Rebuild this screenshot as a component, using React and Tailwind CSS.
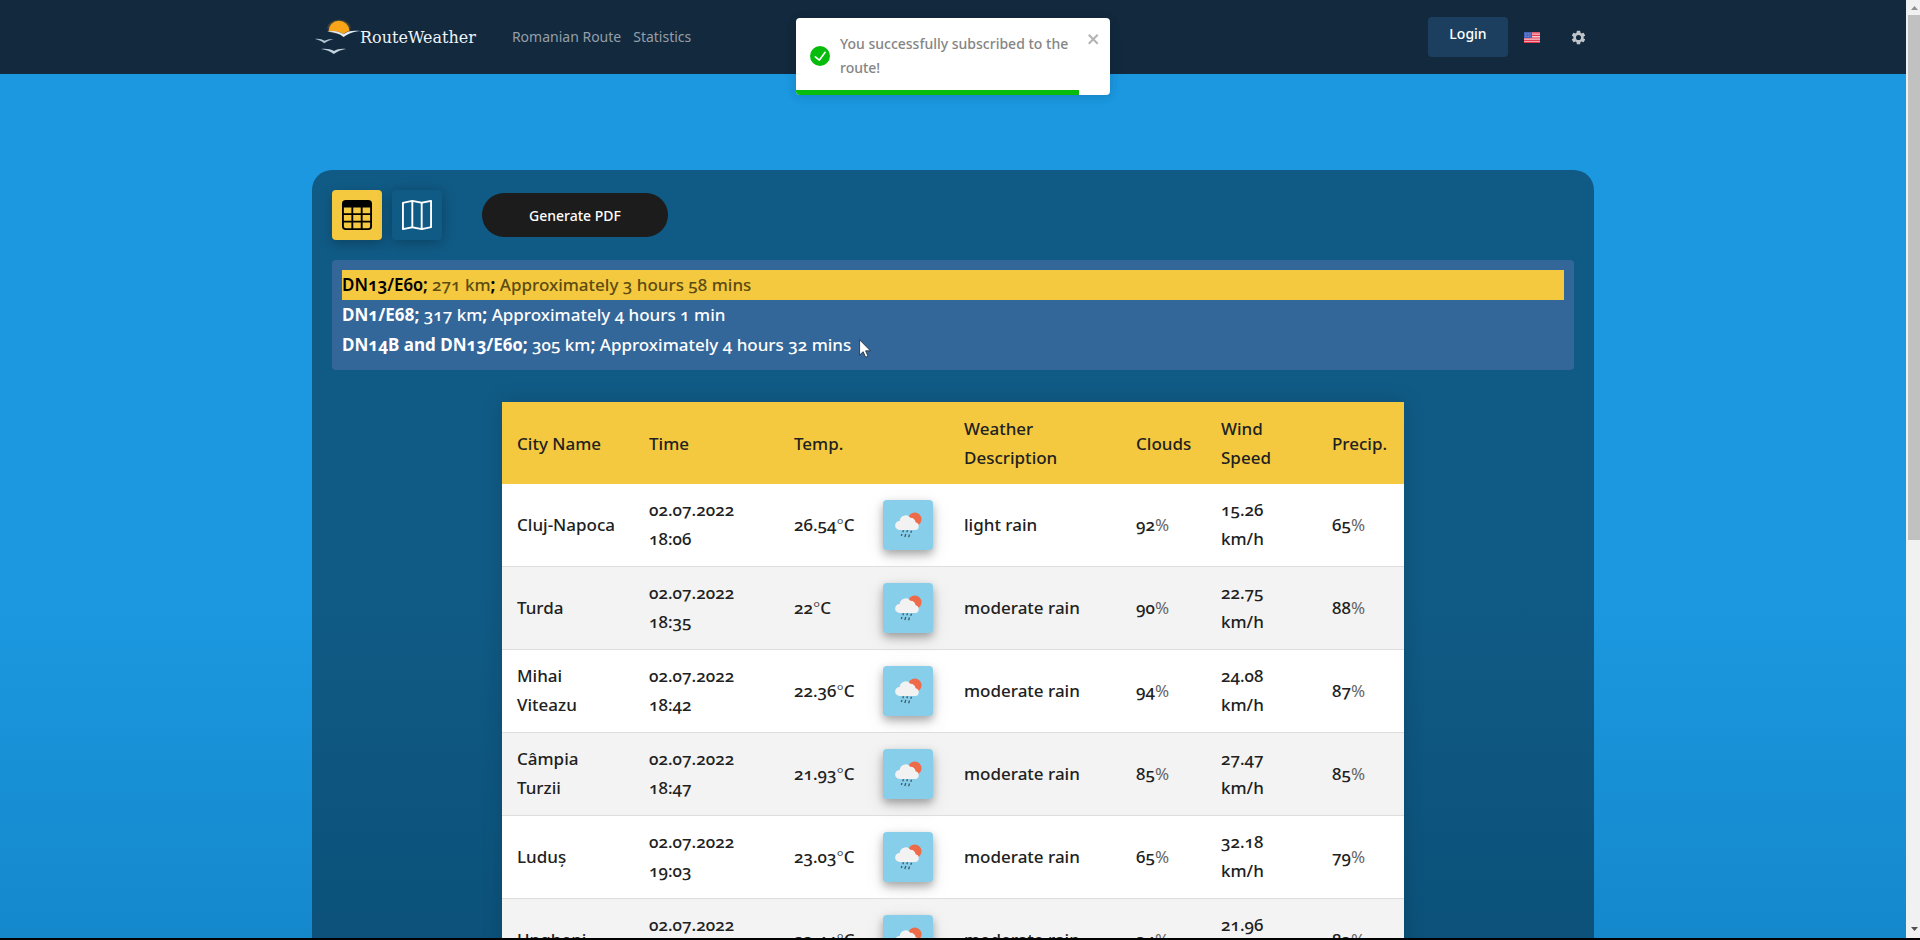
import React from "react";

const routes = [
  { name: "DN13/E60", distance: "271 km", time: "Approximately 3 hours 58 mins", active: true },
  { name: "DN1/E68", distance: "317 km", time: "Approximately 4 hours 1 min", active: false },
  { name: "DN14B and DN13/E60", distance: "305 km", time: "Approximately 4 hours 32 mins", active: false },
];

const rows = [
  { city: "Cluj-Napoca", time: "18:06", temp: "26.54", desc: "light rain", clouds: "92", wind: "15.26", precip: "65" },
  { city: "Turda", time: "18:35", temp: "22", desc: "moderate rain", clouds: "90", wind: "22.75", precip: "88" },
  { city: "Mihai Viteazu", time: "18:42", temp: "22.36", desc: "moderate rain", clouds: "94", wind: "24.08", precip: "87" },
  { city: "Câmpia Turzii", time: "18:47", temp: "21.93", desc: "moderate rain", clouds: "85", wind: "27.47", precip: "85" },
  { city: "Luduș", time: "19:03", temp: "23.03", desc: "moderate rain", clouds: "65", wind: "32.18", precip: "79" },
  { city: "Ungheni", time: "19:34", temp: "23.44", desc: "moderate rain", clouds: "34", wind: "21.96", precip: "83" },
];

function Logo() {
  return (
    <svg viewBox="0 0 46 36" className="h-9 w-[46px]" aria-hidden="true">
      <defs>
        <radialGradient id="glow">
          <stop offset="0.7" stopColor="#f9a51a" stopOpacity="0.3" />
          <stop offset="1" stopColor="#f9a51a" stopOpacity="0" />
        </radialGradient>
      </defs>
      <path d="M11 13a13 13 0 0 1 26 0l-8 3-12-1z" fill="url(#glow)" />
      <path d="M13.500 12.500a10.500 10.500 0 0 1 21-.5c-3 .4-4.500 1.800-6 3.200-3.500-2.800-8-3.600-15-2.700z" fill="#f9a51a" />
      <path d="M12 12.700c7-1.700 12.500-.3 16.500 2.600 4-3.200 8.500-4.100 17-3.300-7.500.7-12 2.600-16.800 6-4.200-3.300-9-5-16.700-5.300z" fill="#e4edf5" />
      <path d="M0 20c4-.5 7 .3 9.500 1.800 2.500-1.500 5-1.900 9-1.500-3.800.7-6.500 2-9.300 4-2.600-2.100-5-3.500-9.200-4.300z" fill="#b6c8d6" />
      <path d="M6 30c5-.7 9.500.1 13 2 3.200-1.900 7-2.500 12-2-5 .8-8.500 2.300-12.200 4.900-3.600-2.600-7.300-4.200-12.800-4.900z" fill="#c3d3df" />
    </svg>
  );
}

function Flag() {
  return (
    <svg viewBox="0 0 16 11" className="h-[11px] w-4" aria-hidden="true">
      <rect width="16" height="11" fill="#f3c9cf" />
      <path d="M0 .8h16M0 3.400h16M0 6h16M0 8.300h16M0 10.400h16" stroke="#e2384f" strokeWidth="1.200" />
      <rect width="8" height="6" fill="#4560b8" />
      <path d="M1 1.500h6M1 3h6M1 4.500h6" stroke="#a9b6e4" strokeWidth=".6" strokeDasharray=".7 .9" />
    </svg>
  );
}

function Gear() {
  return (
    <svg viewBox="0 0 24 24" className="size-[17px]" fill="#bfc4c9" aria-hidden="true">
      <path d="M19.140 12.940c.04-.3.060-.61.060-.94s-.02-.64-.07-.94l2.030-1.580a.49.490 0 0 0 .12-.61l-1.920-3.320a.49.490 0 0 0-.59-.22l-2.390.96a7 7 0 0 0-1.620-.94l-.36-2.540a.48.480 0 0 0-.48-.41h-3.840a.47.470 0 0 0-.47.41l-.36 2.540a7.200 7.200 0 0 0-1.620.94l-2.390-.96a.48.480 0 0 0-.59.220L2.740 8.870a.47.470 0 0 0 .12.610l2.030 1.580c-.05.3-.09.630-.09.940s.02.640.07.940l-2.030 1.580a.49.490 0 0 0-.12.610l1.920 3.320c.12.220.37.290.59.220l2.390-.96c.5.380 1.030.7 1.620.94l.36 2.540c.05.240.24.410.48.410h3.840c.24 0 .44-.17.470-.41l.36-2.540a7 7 0 0 0 1.620-.94l2.390.96c.22.080.47 0 .59-.22l1.920-3.320a.47.470 0 0 0-.12-.61zM12 15.600a3.600 3.600 0 1 1 0-7.200 3.600 3.600 0 0 1 0 7.200z" />
    </svg>
  );
}

function TableIcon() {
  return (
    <svg viewBox="0 0 16 16" className="size-[30px]" fill="black" aria-hidden="true">
      <path d="M0 2a2 2 0 0 1 2-2h12a2 2 0 0 1 2 2v12a2 2 0 0 1-2 2H2a2 2 0 0 1-2-2zm15 2h-4v3h4zm0 4h-4v3h4zm0 4h-4v3h3a1 1 0 0 0 1-1zm-5 3v-3H6v3zm-5 0v-3H1v2a1 1 0 0 0 1 1zm-4-4h4V8H1zm0-4h4V4H1zm5-3v3h4V4zm4 4H6v3h4z" />
    </svg>
  );
}

function MapIcon() {
  return (
    <svg viewBox="0 0 16 16" className="size-[30px]" fill="white" aria-hidden="true">
      <path fillRule="evenodd" d="M15.817.113A.5.500 0 0 1 16 .5v14a.5.500 0 0 1-.402.490l-5 1a.5.500 0 0 1-.196 0L5.500 15.010l-4.902.980A.5.500 0 0 1 0 15.500v-14a.5.500 0 0 1 .402-.49l5-1a.5.500 0 0 1 .196 0L10.500.990l4.902-.98a.5.500 0 0 1 .415.103M10 1.910l-4-.8v12.980l4 .8zm1 12.980 4-.8V1.110l-4 .8zm-6-.8V1.110l-4 .8v12.980z" />
    </svg>
  );
}

function RainIcon() {
  return (
    <div className="flex size-[50px] items-center justify-center rounded bg-[#87ceeb] shadow-[0_4px_8px_0_rgba(0,0,0,0.3),0_6px_20px_0_rgba(0,0,0,0.1)]">
      <svg viewBox="0 0 50 50" className="size-[50px]" role="img" aria-label="Rain">
        <circle cx="31.800" cy="19.200" r="6.700" fill="#ee6b4a" />
        <path d="M16.500 30a4.500 4.500 0 0 1 .2-9 5.900 5.900 0 0 1 10.600-3.300 4.900 4.900 0 0 1 5.300 4.600 4 4 0 0 1 .4 7.700z" fill="#f2f2f2" />
        <path d="M20.500 30.300l-.7 2M24.500 30.300l-.7 2M28.500 30.800l-.7 2M19 34l-.7 2M22.800 34l-1 3M26.500 34.500l-.9 2.800" stroke="#3f5a68" strokeWidth="1.300" />
      </svg>
    </div>
  );
}

function Toast() {
  return (
    <div
      role="status"
      className="absolute top-[18px] left-1/2 w-[314px] -translate-x-1/2 overflow-hidden rounded-[4px] bg-white shadow-[0_1px_10px_0_rgba(0,0,0,0.1),0_2px_15px_0_rgba(0,0,0,0.05)]"
    >
      <div className="flex h-[72px] items-center pt-1 pl-[14px]">
        <svg viewBox="0 0 24 24" className="size-5 shrink-0" fill="#07bc0c" aria-hidden="true">
          <path d="M12 0a12 12 0 1 0 12 12A12.014 12.014 0 0 0 12 0zm6.927 8.200l-6.845 9.289a1.011 1.011 0 0 1-1.430.188l-4.888-3.908a1 1 0 1 1 1.250-1.562l4.076 3.261 6.227-8.451a1 1 0 1 1 1.610 1.183z" />
        </svg>
        <p className="ml-[10px] w-[240px] text-[14px] leading-6 font-medium text-[#858585]">
          You successfully subscribed to the route!
        </p>
        <button type="button" aria-label="Close" className="-mt-[34px] ml-[7px]">
          <svg viewBox="0 0 14 16" className="h-4 w-[14px]" fill="#b3b3b3" aria-hidden="true">
            <path fillRule="evenodd" d="M7.710 8.230l3.750 3.750-1.480 1.480-3.750-3.750-3.750 3.750L1 11.980l3.750-3.750L1 4.480 2.480 3l3.750 3.750L9.980 3l1.480 1.480-3.750 3.750z" />
          </svg>
        </button>
      </div>
      <div className="h-[5px] w-[90%] bg-[#07bc0c]" />
    </div>
  );
}

function Header() {
  return (
    <header className="flex h-[74px] shrink-0 bg-[#13293d]">
      <div className="mx-auto flex w-full max-w-[1282px] items-center pr-[7px] pl-[3px]">
        <a href="#home" className="flex items-center">
          <Logo />
          <span className="-ml-px pt-[2px] font-['Roboto_Slab','DejaVu_Serif',serif] text-[16px] text-[#eef3f7]">RouteWeather</span>
        </a>
        <nav className="ml-9 flex gap-3 pb-[2px] text-[14px] text-[#949fa9]">
          <a href="#route">Romanian Route</a>
          <a href="#statistics">Statistics</a>
        </nav>
        <div className="ml-auto flex items-center">
          <button type="button" className="h-10 w-20 rounded bg-[#1d3f5f] pb-2 text-[14px] font-medium text-white">Login</button>
          <button type="button" aria-label="Language" className="ml-4"><Flag /></button>
          <button type="button" aria-label="Settings" className="ml-[30px]"><Gear /></button>
        </div>
      </div>
    </header>
  );
}

function RouteList() {
  return (
    <ul className="relative mt-5 rounded bg-[#336699] p-[10px] text-[17px] leading-[30px] font-medium">
      {routes.map((r) => (
        <li key={r.name} className={r.active ? "bg-[#f4c93f] text-[#5c4c10]" : "text-white"}>
          <span className={r.active ? "font-semibold text-black" : "font-bold"}>{r.name};</span>{" "}
          <span>{r.distance}</span>
          <span className={r.active ? "font-bold text-black" : "font-bold"}>;</span>{" "}
          <span>{r.time}</span>
        </li>
      ))}
      <li aria-hidden="true" className="absolute top-[79px] left-[527px]">
        <svg viewBox="0 0 12 19" className="h-[19px] w-3">
          <path d="M.6.8v15.200l3.600-3.300 2.400 5.500 2.400-1-2.400-5.400h4.800z" fill="white" stroke="#1b2733" strokeWidth=".8" />
        </svg>
      </li>
    </ul>
  );
}

function WeatherTable() {
  const head = "px-[15px] py-3 font-medium";
  const cell = "px-[15px] pt-[11px] pb-[13px]";
  return (
    <table className="mx-auto mt-8 w-[902px] table-fixed border-collapse bg-white text-left text-[17px] leading-[29px] font-medium text-[#212121] shadow-[0_0_20px_rgba(0,0,0,0.15)]">
      <colgroup>
        <col className="w-[132px]" />
        <col className="w-[145px]" />
        <col className="w-[89px]" />
        <col className="w-[81px]" />
        <col className="w-[172px]" />
        <col className="w-[85px]" />
        <col className="w-[111px]" />
        <col className="w-[87px]" />
      </colgroup>
      <thead className="bg-[#f4c93f]">
        <tr>
          <th scope="col" className={head + " whitespace-nowrap"}>City Name</th>
          <th scope="col" className={head}>Time</th>
          <th scope="col" className={head}>Temp.</th>
          <td />
          <th scope="col" className={head}>Weather Description</th>
          <th scope="col" className={head}>Clouds</th>
          <th scope="col" className={head}>Wind<br />Speed</th>
          <th scope="col" className={head + " whitespace-nowrap"}>Precip.</th>
        </tr>
      </thead>
      <tbody>
        {rows.map((r) => (
          <tr key={r.city} className="border-b border-[#dddddd] even:bg-[#f3f3f3]">
            <td className={cell}>{r.city}</td>
            <td className={cell}>02.07.2022<br />{r.time}</td>
            <td className={cell + " whitespace-nowrap"}>{r.temp}<span className="font-light">°</span>C</td>
            <td className="px-[15px] py-3"><RainIcon /></td>
            <td className={cell}>{r.desc}</td>
            <td className={cell}>{r.clouds}<span className="font-normal text-[#666]">%</span></td>
            <td className={cell}>{r.wind}<br />km/h</td>
            <td className={cell}>{r.precip}<span className="font-normal text-[#666]">%</span></td>
          </tr>
        ))}
      </tbody>
    </table>
  );
}

function Scrollbar() {
  return (
    <div aria-hidden="true" className="flex w-[14px] shrink-0 flex-col items-end bg-[#f1f1f1]">
      <div className="flex h-[15px] w-3 items-center justify-center">
        <svg viewBox="0 0 7 4" className="h-1 w-[7px]" fill="#8f8f8f"><path d="M0 4L3.500 0 7 4z" /></svg>
      </div>
      <div className="h-[56%] w-3 bg-[#c1c1c1]" />
      <div className="mt-auto flex h-[18px] w-3 items-center justify-center">
        <svg viewBox="0 0 7 4" className="h-1 w-[7px]" fill="#505050"><path d="M0 0L3.500 4 7 0z" /></svg>
      </div>
    </div>
  );
}

export default function App() {
  return (
    <div className="flex h-screen border-b-2 border-black font-['Noto_Sans','Open_Sans',sans-serif] oldstyle-nums">
      <div className="relative flex min-w-0 flex-1 flex-col overflow-hidden bg-linear-to-b from-[#1b98e0] from-65% to-[#1588cc]">
        <Header />
        <Toast />
        <main className="mx-auto mt-24 w-full max-w-[1282px] shrink-0 rounded-t-[20px] bg-linear-to-b from-[#105b86] from-50% to-[#0b5078] p-5">
          <div className="flex items-center">
            <button type="button" aria-label="Table view" className="flex size-[50px] items-center justify-center rounded bg-[#f4c93f] shadow-[0_4px_12px_0_rgba(0,0,0,0.25)]">
              <TableIcon />
            </button>
            <button type="button" aria-label="Map view" className="ml-[10px] flex size-[50px] items-center justify-center rounded bg-[#105b86] shadow-[0_2px_14px_0_rgba(0,0,0,0.3)]">
              <MapIcon />
            </button>
            <button type="button" className="ml-10 h-11 w-[186px] rounded-full bg-[#1c1c1c] text-[14px] font-medium text-white">
              Generate PDF
            </button>
          </div>
          <RouteList />
          <WeatherTable />
        </main>
      </div>
      <Scrollbar />
    </div>
  );
}
